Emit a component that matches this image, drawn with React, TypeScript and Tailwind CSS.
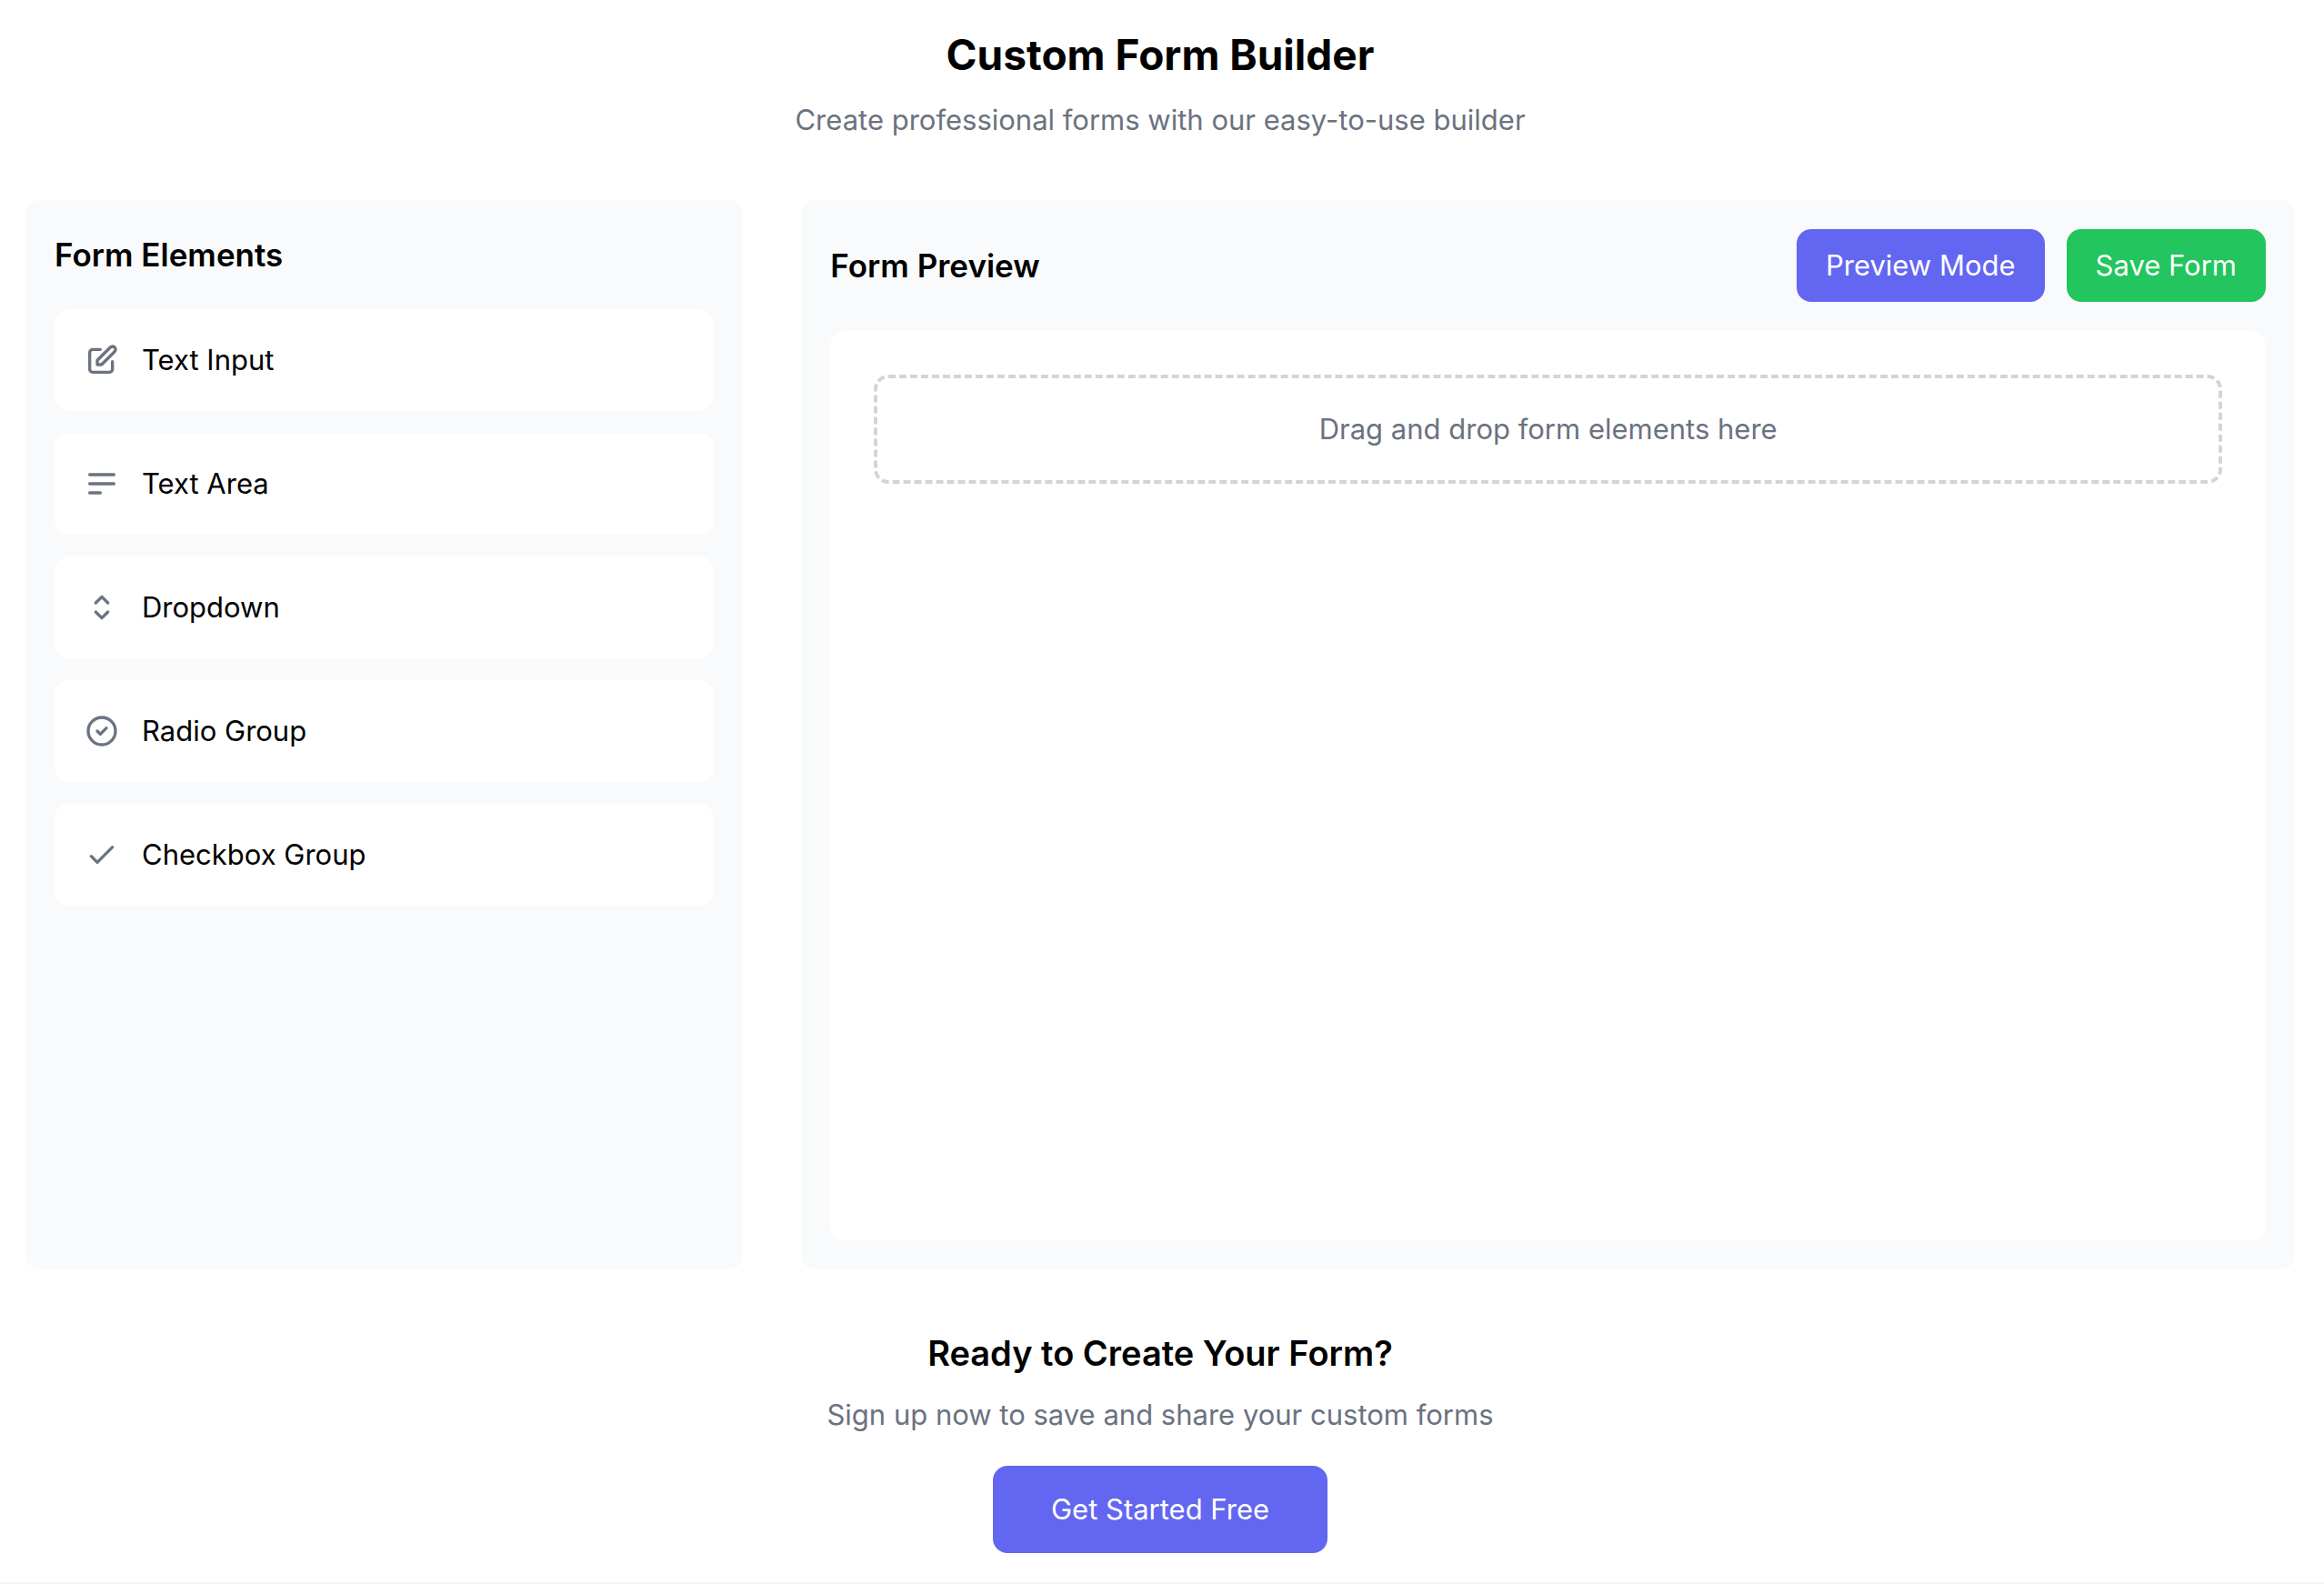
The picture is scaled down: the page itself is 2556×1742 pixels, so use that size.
import { useState } from "react";

interface FormElement {
  id: string;
  label: string;
  icon: string;
}

// Outline icons on a 24x24 grid.
const FORM_ELEMENTS: FormElement[] = [
  {
    id: "text",
    label: "Text Input",
    icon: "M11 5H6a2 2 0 00-2 2v11a2 2 0 002 2h11a2 2 0 002-2v-5m-1.414-9.414a2 2 0 112.828 2.828L11.828 15H9v-2.828l8.586-8.586z",
  },
  { id: "textarea", label: "Text Area", icon: "M4 6h16M4 12h16M4 18h7" },
  { id: "select", label: "Dropdown", icon: "M8 9l4-4 4 4m0 6l-4 4-4-4" },
  {
    id: "radio",
    label: "Radio Group",
    icon: "M9 12l2 2 4-4m6 2a9 9 0 11-18 0 9 9 0 0118 0z",
  },
  { id: "checkbox", label: "Checkbox Group", icon: "M5 13l4 4L19 7" },
];

function ElementIcon({ path }: { path: string }): React.JSX.Element {
  return (
    <svg
      aria-hidden
      className="size-10 shrink-0 text-[#6b7280]"
      fill="none"
      stroke="currentColor"
      strokeWidth={2}
      strokeLinecap="round"
      strokeLinejoin="round"
      viewBox="0 0 24 24"
    >
      <path d={path} />
    </svg>
  );
}

function ElementsPanel(): React.JSX.Element {
  return (
    <aside className="rounded-2xl bg-[#f9fafb] p-8">
      <h2 className="mb-8 text-[35px] leading-14 font-semibold">Form Elements</h2>
      <ul className="flex flex-col gap-6">
        {FORM_ELEMENTS.map((el) => (
          <li
            key={el.id}
            draggable
            onDragStart={(e) => e.dataTransfer.setData("text/plain", el.id)}
            className="flex cursor-move items-center gap-6 rounded-2xl bg-white p-8"
          >
            <ElementIcon path={el.icon} />
            <span>{el.label}</span>
          </li>
        ))}
      </ul>
    </aside>
  );
}

function PreviewPanel(): React.JSX.Element {
  const [dropped, setDropped] = useState<string[]>([]);

  function onDrop(e: React.DragEvent): void {
    e.preventDefault();
    const el = FORM_ELEMENTS.find((f) => f.id === e.dataTransfer.getData("text/plain"));
    if (!el) return;
    setDropped((prev) => [...prev, el.label]);
  }

  return (
    <section className="rounded-2xl bg-[#f9fafb] p-8 lg:col-span-2">
      <div className="mb-8 flex items-center justify-between">
        <h2 className="text-[35px] leading-14 font-semibold">Form Preview</h2>
        <div className="flex gap-6">
          <button type="button" className="rounded-2xl bg-[#6366f1] px-8 py-4 text-white">
            Preview Mode
          </button>
          <button type="button" className="rounded-2xl bg-[#22c55e] px-8 py-4 text-white">
            Save Form
          </button>
        </div>
      </div>
      <div
        className="min-h-[1000px] rounded-2xl bg-white p-12"
        onDragOver={(e) => e.preventDefault()}
        onDrop={onDrop}
      >
        {dropped.map((label, i) => (
          <p key={i} className="mb-8">
            {label}
          </p>
        ))}
        <div className="rounded-2xl border-4 border-dashed border-[#d1d5db] p-8 text-center text-[#6b7280]">
          Drag and drop form elements here
        </div>
      </div>
    </section>
  );
}

export default function App(): React.JSX.Element {
  return (
    <div className="min-h-screen bg-white font-['Inter',sans-serif] text-[31px] leading-12 text-black">
      <main className="pt-7 pr-8 pb-8 pl-7">
        <header className="mb-16 text-center">
          <h1 className="mb-4 text-[46px] leading-16 font-bold">Custom Form Builder</h1>
          <p className="text-[#6b7280]">Create professional forms with our easy-to-use builder</p>
        </header>

        <div className="grid gap-16 lg:grid-cols-3">
          <ElementsPanel />
          <PreviewPanel />
        </div>

        <section className="mt-16 text-center">
          <h2 className="mb-4 text-[38px] leading-14 font-semibold">Ready to Create Your Form?</h2>
          <p className="mb-8 text-[#6b7280]">Sign up now to save and share your custom forms</p>
          <button type="button" className="rounded-2xl bg-[#6366f1] px-16 py-6 text-white">
            Get Started Free
          </button>
        </section>
      </main>
      <footer className="border-t-2 border-[#f3f4f6]" />
    </div>
  );
}
